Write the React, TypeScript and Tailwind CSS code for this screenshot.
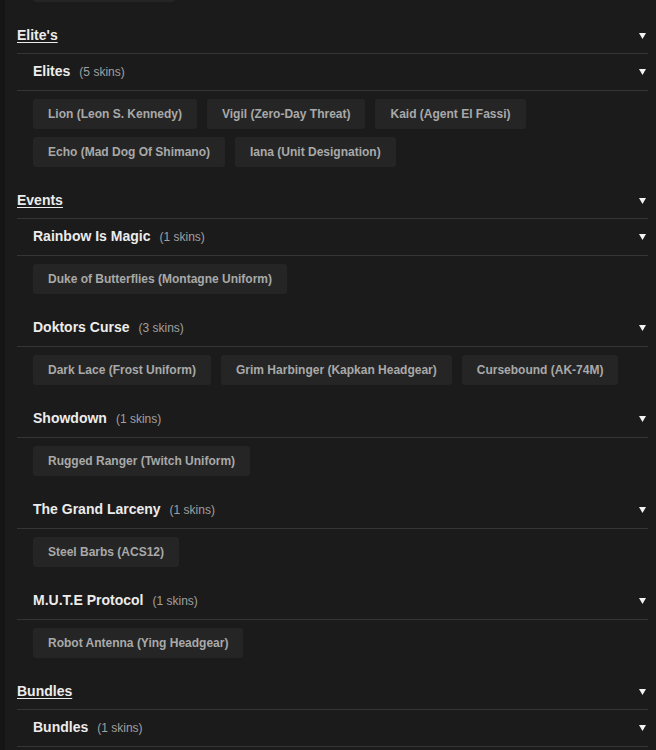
import React from 'react';

type Group = { name: string; skins: string[] };
type Category = { title: string; groups: Group[] };

const categories: Category[] = [
  {
    title: "Elite's",
    groups: [
      {
        name: 'Elites',
        skins: [
          'Lion (Leon S. Kennedy)',
          'Vigil (Zero-Day Threat)',
          'Kaid (Agent El Fassi)',
          'Echo (Mad Dog Of Shimano)',
          'Iana (Unit Designation)',
        ],
      },
    ],
  },
  {
    title: 'Events',
    groups: [
      { name: 'Rainbow Is Magic', skins: ['Duke of Butterflies (Montagne Uniform)'] },
      {
        name: 'Doktors Curse',
        skins: ['Dark Lace (Frost Uniform)', 'Grim Harbinger (Kapkan Headgear)', 'Cursebound (AK-74M)'],
      },
      { name: 'Showdown', skins: ['Rugged Ranger (Twitch Uniform)'] },
      { name: 'The Grand Larceny', skins: ['Steel Barbs (ACS12)'] },
      { name: 'M.U.T.E Protocol', skins: ['Robot Antenna (Ying Headgear)'] },
    ],
  },
  {
    title: 'Bundles',
    groups: [{ name: 'Bundles', skins: [] }],
  },
];

function Caret() {
  return (
    <svg width="7" height="6" viewBox="0 0 7 6" className="shrink-0 mr-[2px]">
      <path d="M0 0 H7 L3.5 6 Z" fill="#f2f2f2" />
    </svg>
  );
}

function Chip({ label }: { label: string }) {
  return (
    <div className="h-[30px] px-[15px] flex items-center rounded-[3px] bg-[#252525] text-[12px] font-bold text-[#a9a9a9]">
      {label}
    </div>
  );
}

export default function App() {
  return (
    <div
      className="min-h-screen bg-[#1b1b1b] flex"
      style={{ fontFamily: '"Liberation Sans", Arial, sans-serif' }}
    >
      <div className="w-[5px] shrink-0 bg-[#151515]" />
      <div className="flex-1 pl-3 pr-2 -mt-[28px]">
        {/* leftover chip from the section above */}
        <div className="pl-4 pb-4">
          <div className="h-[30px] w-[142px] rounded-[3px] bg-[#252525]" />
        </div>

        {categories.map((cat) => (
          <div key={cat.title}>
            <div className="flex items-center justify-between py-[9px] border-b border-[#353535]">
              <span className="text-[14px] leading-[17px] font-bold text-[#ececec] underline underline-offset-2">
                {cat.title}
              </span>
              <Caret />
            </div>

            {cat.groups.map((g) => (
              <div key={g.name}>
                <div className="flex items-center justify-between py-[9px] pl-4 border-b border-[#353535]">
                  <div className="flex items-baseline gap-[9px]">
                    <span className="text-[14px] leading-[17px] font-bold text-[#ececec]">{g.name}</span>
                    <span className="text-[12px] text-[#a0a0a0]">({g.skins.length || 1} skins)</span>
                  </div>
                  <Caret />
                </div>
                {g.skins.length > 0 && (
                  <div className="flex flex-wrap gap-x-[10px] gap-y-2 pl-4 pt-2 pb-4">
                    {g.skins.map((s) => (
                      <Chip key={s} label={s} />
                    ))}
                  </div>
                )}
              </div>
            ))}
          </div>
        ))}
      </div>
    </div>
  );
}
